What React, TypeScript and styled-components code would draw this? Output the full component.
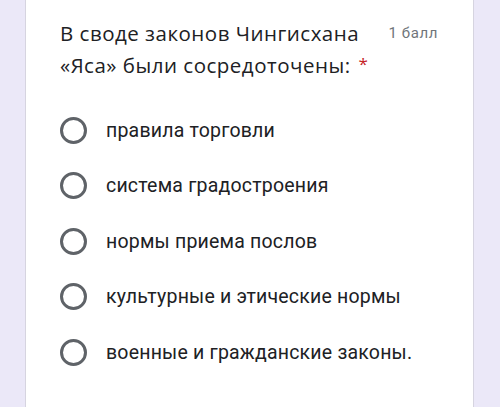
import styled, { createGlobalStyle } from 'styled-components';

const GlobalStyle = createGlobalStyle`
  html, body {
    margin: 0;
    padding: 0;
    background: #ebe8f8;
  }
  body {
    font-family: Roboto, "Liberation Sans", sans-serif;
  }
`;

const Page = styled.div`
  height: 407px;
  padding: 0 26px 0 25px;
  box-sizing: border-box;
  overflow: hidden;
`;

const Card = styled.div`
  height: 100%;
  background: #fff;
  border-left: 1px solid #d6d4e0;
  border-right: 1px solid #d6d4e0;
  padding: 17px 35px 0 34px;
  box-sizing: border-box;
`;

const Header = styled.div`
  display: flex;
  align-items: flex-start;
  justify-content: space-between;
  gap: 20px;
`;

const Title = styled.div`
  font-family: "Open Sans", Roboto, sans-serif;
  font-size: 20.5px;
  line-height: 32px;
  color: #202124;
  letter-spacing: 0.5px;
  max-width: 320px;
`;

const Required = styled.span`
  display: inline-block;
  font-size: 17px;
  line-height: 20px;
  vertical-align: 3px;
  color: #c5221f;
  margin-left: 8px;
`;

const Points = styled.div`
  font-size: 15px;
  line-height: 32px;
  color: #70757a;
  letter-spacing: 0.6px;
  white-space: nowrap;
`;

const Options = styled.div`
  display: flex;
  flex-direction: column;
  gap: 27.5px;
  margin-top: 35px;
`;

const Option = styled.label`
  display: flex;
  align-items: center;
  gap: 19px;
  height: 28px;
`;

const Radio = styled.span`
  width: 21px;
  height: 21px;
  border: 3px solid #5f6368;
  border-radius: 50%;
  flex-shrink: 0;
`;

const OptionText = styled.span`
  font-size: 19.5px;
  color: #202124;
  letter-spacing: 0.2px;
`;

const options = [
  'правила торговли',
  'система градостроения',
  'нормы приема послов',
  'культурные и этические нормы',
  'военные и гражданские законы.',
];

export default function App() {
  return (
    <>
      <GlobalStyle />
      <Page>
        <Card>
          <Header>
            <Title>
              В своде законов Чингисхана «Яса» были сосредоточены:
              <Required>*</Required>
            </Title>
            <Points>1 балл</Points>
          </Header>
          <Options>
            {options.map((o) => (
              <Option key={o}>
                <Radio />
                <OptionText>{o}</OptionText>
              </Option>
            ))}
          </Options>
        </Card>
      </Page>
    </>
  );
}
